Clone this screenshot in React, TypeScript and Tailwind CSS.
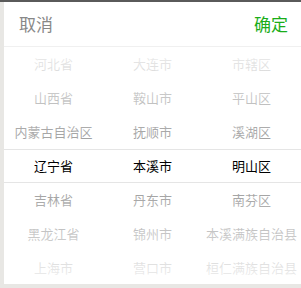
const columns: string[][] = [
  ['河北省', '山西省', '内蒙古自治区', '辽宁省', '吉林省', '黑龙江省', '上海市'],
  ['大连市', '鞍山市', '抚顺市', '本溪市', '丹东市', '锦州市', '营口市'],
  ['市辖区', '平山区', '溪湖区', '明山区', '南芬区', '本溪满族自治县', '桓仁满族自治县'],
];

export default function App() {
  return (
    <div
      className="flex h-[288px] w-[301px] flex-col bg-[#e8e7e4]"
      style={{ fontFamily: '"Noto Sans CJK SC", "Noto Sans", sans-serif' }}
    >
      <div className="h-[2px] bg-[#5a5a5a]" />
      <div className="flex h-[282px]">
        <div className="w-[4px]" />
        <div className="flex flex-1 flex-col bg-white">
          <div className="flex h-[45px] items-center justify-between border-b border-[#f0f0f0] pl-[15px] pr-[13px] text-[17px]">
            <span className="text-[#888]">取消</span>
            <span className="text-[#1aad19]">确定</span>
          </div>
          <div className="relative h-[238px] overflow-hidden">
            <div className="grid grid-cols-3">
              {columns.map((col, ci) => (
                <div key={ci} className="flex flex-col">
                  {col.map((item) => (
                    <div
                      key={item}
                      className="flex h-[34px] items-center justify-center whitespace-nowrap text-[13px] text-black"
                    >
                      {item}
                    </div>
                  ))}
                </div>
              ))}
            </div>
            <div className="absolute inset-x-0 top-0 h-[102px] bg-gradient-to-b from-white/95 to-white/60" />
            <div className="absolute inset-x-0 bottom-0 h-[102px] bg-gradient-to-t from-white/95 to-white/60" />
            <div className="absolute inset-x-0 top-[102px] h-[34px] border-y border-[#e5e5e5]" />
          </div>
        </div>
      </div>
    </div>
  );
}
